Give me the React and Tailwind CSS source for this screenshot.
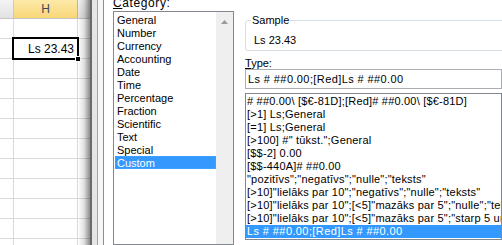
import React from 'react';

const categories = [
  'General',
  'Number',
  'Currency',
  'Accounting',
  'Date',
  'Time',
  'Percentage',
  'Fraction',
  'Scientific',
  'Text',
  'Special',
  'Custom',
];

const formats = [
  '# ##0.00\\ [$€-81D];[Red]# ##0.00\\ [$€-81D]',
  '[>1] Ls;General',
  '[=1] Ls;General',
  '[>100] #" tūkst.";General',
  '[$$-2] 0.00',
  '[$$-440A]# ##0.00',
  '"pozitīvs";"negatīvs";"nulle";"teksts"',
  '[>10]"lielāks par 10";"negatīvs";"nulle";"teksts"',
  '[>10]"lielāks par 10";[<5]"mazāks par 5";"nulle";"teksts"',
  '[>10]"lielāks par 10";[<5]"mazāks par 5";"starp 5 un 10";"teksts"',
  'Ls # ##0.00;[Red]Ls # ##0.00',
];

const font = { fontFamily: '"Liberation Sans", Arial, sans-serif' };

// the worksheet strip on the left, half hidden under the dialog
const Sheet = () => {
  const rows = Array.from({ length: 12 });
  return (
    <div className="relative w-[90px] shrink-0 h-full bg-white overflow-hidden">
      <div className="flex h-[19px] border-b border-[#c5c5c5]">
        <div className="w-[14px] shrink-0 bg-gradient-to-b from-[#f4f4f4] to-[#e2e2e2] border-r border-[#c9c9c9]" />
        <div className="w-[64px] shrink-0 bg-gradient-to-b from-[#fde9a8] to-[#f8d677] border-r border-[#e0b44c] flex items-center justify-center text-[12px] text-[#3b4a5a]">
          H
        </div>
        <div className="flex-1 bg-gradient-to-b from-[#f4f4f4] to-[#e2e2e2]" />
      </div>
      {rows.map((_, i) => (
        <div key={i} className="flex h-[20px] border-b border-[#dadada]">
          <div className="w-[14px] shrink-0 border-r border-[#dadada]" />
          <div className="w-[64px] shrink-0 border-r border-[#dadada]" />
          <div className="flex-1" />
        </div>
      ))}

      {/* active cell */}
      <div className="absolute left-[12px] top-[37px] w-[67px] h-[23px] border-2 border-black flex items-center justify-end pr-[3px] text-[12px] text-black bg-white">
        Ls 23.43
      </div>
      <div className="absolute left-[75px] top-[56px] w-[6px] h-[6px] bg-black border border-white" />

      {/* dialog drop shadow */}
      <div className="absolute right-0 top-0 w-[12px] h-full bg-gradient-to-r from-[rgba(0,0,0,0)] via-[rgba(0,0,0,0.12)] to-[rgba(0,0,0,0.45)]" />
    </div>
  );
};

const Frame = () => (
  <div className="flex h-full shrink-0">
    <div className="w-[2px] bg-[#6a6a6a]" />
    <div className="w-[5px] bg-[#e6e6e6]" />
    <div className="w-[1px] bg-[#a3a3a3]" />
    <div className="w-[5px] bg-[#f6f6f6]" />
    <div className="w-[1px] bg-[#8e8f8f]" />
    <div className="w-[9px] bg-white" />
  </div>
);

const CategoryList = () => (
  <div className="w-[121px] shrink-0 flex flex-col">
    <div className="-mt-[3px] h-[16px] text-[12px] leading-[13px] tracking-[0.6px] text-black">
      <span className="underline">C</span>ategory:
    </div>
    <div className="flex h-[260px] border border-[#828790] bg-white">
      <div className="flex-1 pt-[1px] pl-[1px]">
        {categories.map((c) => (
          <div
            key={c}
            className={
              c === 'Custom'
                ? 'h-[13px] flex items-center pl-[1px] border border-dotted border-[#d08a2c] bg-[#3399ff] text-white text-[11px]'
                : 'h-[13px] flex items-center pl-[1px] border border-transparent text-black text-[11px]'
            }
          >
            {c}
          </div>
        ))}
      </div>
      <div className="w-[17px] bg-[#efefef] flex justify-center pt-[8px]">
        <svg width="7" height="4" viewBox="0 0 7 4">
          <path d="M0 4 L3.5 0 L7 4 Z" fill="#9a9a9a" />
        </svg>
      </div>
    </div>
  </div>
);

const TypePanel = () => (
  <div className="w-[257px] shrink-0 ml-[11px] flex flex-col">
    <div className="relative mt-[20px] w-[268px] h-[31px] border border-[#d5dfe5] rounded-[3px] pl-[8px] pt-[13px] text-[11px] leading-[13px] text-black">
      <span className="absolute left-[5px] -top-[7px] bg-white px-[1px] leading-[13px]">Sample</span>
      Ls 23.43
    </div>
    <div className="mt-[6px] h-[12px] text-[11px] leading-[12px] text-black">
      <span className="underline">T</span>ype:
    </div>
    <div className="h-[20px] border border-[#abadb3] pl-[2px] text-[11px] leading-[18px] tracking-[0.4px] text-black whitespace-nowrap overflow-hidden">
      Ls # ##0.00;[Red]Ls # ##0.00
    </div>
    <div className="mt-[4px] h-[147px] border border-[#828790] pt-[1px] overflow-hidden bg-white">
      {formats.map((f, i) => (
        <div
          key={i}
          className={
            i === formats.length - 1
              ? 'h-[13px] leading-[13px] pl-[1px] text-[11px] tracking-[0.4px] whitespace-nowrap bg-[#3399ff] text-white'
              : 'h-[13px] leading-[13px] pl-[1px] text-[11px] tracking-[0.2px] whitespace-nowrap text-black'
          }
        >
          {f}
        </div>
      ))}
    </div>
  </div>
);

export default function App() {
  return (
    <div className="flex w-[502px] h-[245px] overflow-hidden bg-white" style={font}>
      <Sheet />
      <Frame />
      <CategoryList />
      <TypePanel />
    </div>
  );
}
